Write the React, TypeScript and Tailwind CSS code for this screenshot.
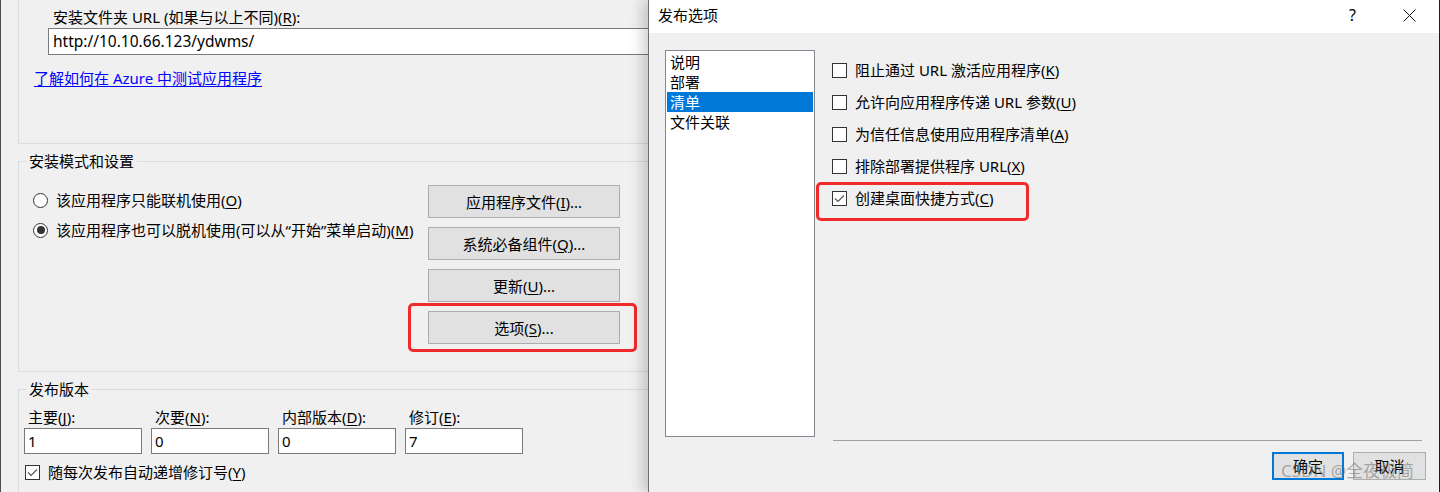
import type { ReactNode } from "react";

const Key = ({ children }: { children: ReactNode }) => (
  <u className="underline underline-offset-[2px] decoration-1">{children}</u>
);

const Radio = ({ checked, children }: { checked?: boolean; children: ReactNode }) => (
  <div className="flex items-center h-[20px] gap-[8px]">
    <span className="w-[15px] h-[15px] rounded-full border border-[#333] bg-white flex items-center justify-center shrink-0">
      {checked && <span className="w-[8px] h-[8px] rounded-full bg-[#333]" />}
    </span>
    <span className="leading-[20px] whitespace-nowrap">{children}</span>
  </div>
);

const CheckBox = ({ checked, children }: { checked?: boolean; children: ReactNode }) => (
  <div className="flex items-center h-[20px] gap-[8px]">
    <span className="w-[15px] h-[15px] border border-[#333] bg-white flex items-center justify-center shrink-0">
      {checked && (
        <svg width="13" height="13" viewBox="0 0 13 13">
          <polyline points="2,6.5 5,9.5 11,3.5" fill="none" stroke="#555" strokeWidth="1.2" />
        </svg>
      )}
    </span>
    <span className="leading-[20px] whitespace-nowrap">{children}</span>
  </div>
);

const Button = ({ children }: { children: ReactNode }) => (
  <div className="h-[33px] bg-[#e1e1e1] border border-[#adadad] flex items-center justify-center leading-[20px]">
    {children}
  </div>
);

const VersionField = ({ label, value }: { label: ReactNode; value: string }) => (
  <div className="w-[118px] flex flex-col">
    <div className="pl-[4px] leading-[20px] whitespace-nowrap">{label}</div>
    <div className="mt-[1px] h-[26px] border border-[#7a7a7a] bg-white pl-[3px] leading-[24px]">{value}</div>
  </div>
);

const LeftWindow = () => (
  <div className="relative w-[648px] h-[492px] shrink-0 overflow-hidden bg-[#f0f0f0] border-l border-[#4b4b4b]">
    <div className="ml-[17px] w-[720px] h-[144px] border-l border-b border-[#dcdcdc] pt-[7px]">
      <div className="ml-[34px] leading-[20px]">
        安装文件夹 URL (如果与以上不同)(<Key>R</Key>):
      </div>
      <div className="ml-[29px] mt-[1px] h-[27px] border border-[#7a7a7a] bg-white pl-[4px] leading-[25px] text-[15.5px]">
        http://10.10.66.123/ydwms/
      </div>
      <a className="block ml-[15px] mt-[13px] leading-[20px] text-[#0000ff] underline underline-offset-[2px]">
        了解如何在 Azure 中测试应用程序
      </a>
    </div>

    <fieldset className="ml-[17px] mt-[7px] w-[720px] border border-[#dcdcdc] pb-[27px]">
      <legend className="ml-[7px] px-[3px] leading-[20px]">安装模式和设置</legend>
      <div className="flex pt-[14px]">
        <div className="w-[409px] pl-[14px] pt-[5px] flex flex-col gap-[10px]">
          <Radio>
            该应用程序只能联机使用(<Key>O</Key>)
          </Radio>
          <Radio checked>
            该应用程序也可以脱机使用(可以从“开始”菜单启动)(<Key>M</Key>)
          </Radio>
        </div>
        <div className="w-[192px] flex flex-col gap-[9px]">
          <Button>
            应用程序文件(<Key>I</Key>)...
          </Button>
          <Button>
            系统必备组件(<Key>Q</Key>)...
          </Button>
          <Button>
            更新(<Key>U</Key>)...
          </Button>
          <Button>
            选项(<Key>S</Key>)...
          </Button>
        </div>
      </div>
    </fieldset>

    <fieldset className="ml-[17px] mt-[7px] w-[720px] border border-[#dcdcdc] pb-[20px]">
      <legend className="ml-[7px] px-[3px] leading-[20px]">发布版本</legend>
      <div className="pt-[8px] pl-[5px] flex gap-[9px]">
        <VersionField label={<>主要(<Key>J</Key>):</>} value="1" />
        <VersionField label={<>次要(<Key>N</Key>):</>} value="0" />
        <VersionField label={<>内部版本(<Key>D</Key>):</>} value="0" />
        <VersionField label={<>修订(<Key>E</Key>):</>} value="7" />
      </div>
      <div className="mt-[8px] pl-[6px]">
        <CheckBox checked>
          随每次发布自动递增修订号(<Key>Y</Key>)
        </CheckBox>
      </div>
    </fieldset>

    {/* annotation */}
    <div className="absolute left-[407px] top-[303px] w-[229px] h-[49px] border-[3px] border-[#f02a2a] rounded-[5px]" />
  </div>
);

const Dialog = () => (
  <div className="relative w-[791px] h-[492px] shrink-0 bg-[#f0f0f0] border-l border-[#6e6e6e] shadow-[-6px_0_12px_rgba(0,0,0,0.18)] flex flex-col">
    <div className="h-[33px] bg-white flex items-center pl-[9px] pb-[3px]">
      <span className="leading-[20px]">发布选项</span>
      <div className="ml-auto flex pr-[1px]">
        <div className="w-[57px] h-[30px] flex items-center justify-center text-[16px]">?</div>
        <div className="w-[57px] h-[30px] flex items-center justify-center">
          <svg width="13" height="13" viewBox="0 0 13 13">
            <path d="M0.5 0.5 L12.5 12.5 M12.5 0.5 L0.5 12.5" stroke="#111" strokeWidth="1" fill="none" />
          </svg>
        </div>
      </div>
    </div>

    <div className="flex pl-[16px] pt-[17px]">
      <div className="w-[150px] h-[387px] border border-[#828790] bg-white p-[1px]">
        {["说明", "部署", "清单", "文件关联"].map((item) => (
          <div
            key={item}
            className={
              item === "清单"
                ? "h-[20px] leading-[20px] pl-[3px] bg-[#0078d7] text-white"
                : "h-[20px] leading-[20px] pl-[3px]"
            }
          >
            {item}
          </div>
        ))}
      </div>

      <div className="ml-[17px] w-[594px] flex flex-col">
        <div className="h-[390px] pt-[10px] flex flex-col gap-[12px]">
          <CheckBox>
            阻止通过 URL 激活应用程序(<Key>K</Key>)
          </CheckBox>
          <CheckBox>
            允许向应用程序传递 URL 参数(<Key>U</Key>)
          </CheckBox>
          <CheckBox>
            为信任信息使用应用程序清单(<Key>A</Key>)
          </CheckBox>
          <CheckBox>
            排除部署提供程序 URL(<Key>X</Key>)
          </CheckBox>
          <CheckBox checked>
            创建桌面快捷方式(<Key>C</Key>)
          </CheckBox>
        </div>
        <div className="ml-[1px] mr-[4px] h-px bg-[#a0a0a0]" />
        <div className="mt-[11px] flex justify-end gap-[9px]">
          <div className="w-[72px] h-[28px] bg-[#e1e1e1] border-2 border-[#0078d7] flex items-center justify-center leading-[20px]">
            确定
          </div>
          <div className="w-[73px] h-[28px] bg-[#e1e1e1] border border-[#adadad] flex items-center justify-center leading-[20px]">
            取消
          </div>
        </div>
      </div>
    </div>

    {/* annotation */}
    <div className="absolute left-[167px] top-[182px] w-[213px] h-[39px] border-[3px] border-[#f02a2a] rounded-[5px]" />
    {/* watermark */}
    <div className="absolute left-[632px] top-[460px] text-[17px] leading-[22px] text-[rgba(110,110,110,0.55)] whitespace-nowrap">
      CSDN @全夜极简
    </div>
  </div>
);

export default function App() {
  return (
    <div className="w-[1440px] h-[492px] overflow-hidden flex bg-[#1e1e1e] text-[15px] text-black font-['Noto_Sans','Noto_Sans_CJK_SC',sans-serif]">
      <LeftWindow />
      <Dialog />
    </div>
  );
}
